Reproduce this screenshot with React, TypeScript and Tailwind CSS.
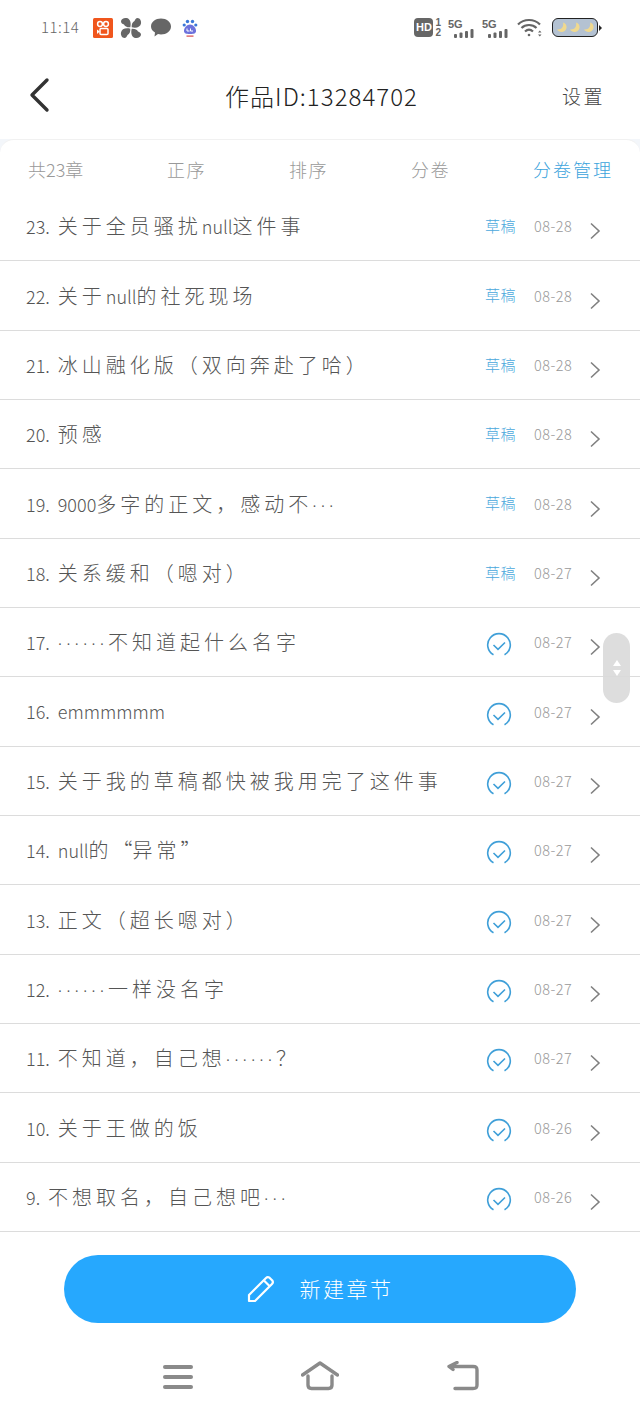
const drafts = [
  { title: "23. 关于全员骚扰null这件事", date: "08-28", draft: true },
  { title: "22. 关于null的社死现场", date: "08-28", draft: true },
  { title: "21. 冰山融化版（双向奔赴了哈）", date: "08-28", draft: true },
  { title: "20. 预感", date: "08-28", draft: true },
  { title: "19. 9000多字的正文，感动不···", date: "08-28", draft: true },
  { title: "18. 关系缓和（嗯对）", date: "08-27", draft: true },
  { title: "17. ······不知道起什么名字", date: "08-27", draft: false },
  { title: "16. emmmmmm", date: "08-27", draft: false },
  { title: "15. 关于我的草稿都快被我用完了这件事", date: "08-27", draft: false },
  { title: "14. null的“异常”", date: "08-27", draft: false },
  { title: "13. 正文（超长嗯对）", date: "08-27", draft: false },
  { title: "12. ······一样没名字", date: "08-27", draft: false },
  { title: "11. 不知道，自己想······？", date: "08-27", draft: false },
  { title: "10. 关于王做的饭", date: "08-26", draft: false },
  { title: "9. 不想取名，自己想吧···", date: "08-26", draft: false },
];

// latin runs sit tighter than the hanzi in the original handwriting font
const Title = ({ text }: { text: string }) => (
  <>
    {text
      .split(/(·+|“|emmmmmm|[0-9A-Za-z. ]+)/)
      .filter(Boolean)
      .map((part, i) => {
        if (part[0] === "·")
          return (
            <span key={i} className="text-[18px] tracking-[4px] [font-family:'Noto_Sans',sans-serif]">
              {part}
            </span>
          );
        if (part === "“")
          return (
            <span key={i} className="text-[20px]">
              {part}
            </span>
          );
        if (part === "emmmmmm")
          return (
            <span key={i} className="text-[18px] tracking-[-1.5px]">
              {part}
            </span>
          );
        if (/^[0-9A-Za-z. ]/.test(part))
          return (
            <span key={i} className="text-[18px] [word-spacing:4px]">
              {part}
            </span>
          );
        return (
          <span key={i} className="text-[20px] tracking-[4px]">
            {part}
          </span>
        );
      })}
  </>
);

const Chevron = () => (
  <svg width="12" height="18" viewBox="0 0 12 18" className="mt-[10px] shrink-0">
    <path d="M1 1.5 L9 9 L1 16.5" fill="none" stroke="#808080" strokeWidth="1.6" />
  </svg>
);

const CheckCircle = () => (
  <svg width="26" height="26" viewBox="0 0 26 26" className="mt-1.5">
    <path d="M7.5 22.8 A11.3 11.3 0 1 1 18.5 22.8" fill="none" stroke="#3f9fd8" strokeWidth="1.6" />
    <path d="M7.5 13 L12 17.3 L19 10.5" fill="none" stroke="#3f9fd8" strokeWidth="1.6" />
  </svg>
);

const StatusBar = () => (
  <div className="h-[54px] flex items-center justify-between pl-[41px] pr-[38px] pt-[1px]">
    <div className="flex items-center">
      <span className="text-[15px] tracking-[0.5px] text-[#666] w-[52px]">11:14</span>
      <svg width="20" height="20" viewBox="0 0 20 20">
        <rect width="20" height="20" rx="1.5" fill="#f0561d" />
        <circle cx="7" cy="6" r="2.4" fill="none" stroke="#fff" strokeWidth="1.5" />
        <circle cx="13" cy="6" r="2.4" fill="none" stroke="#fff" strokeWidth="1.5" />
        <rect x="7" y="10.5" width="8" height="6" rx="1" fill="none" stroke="#fff" strokeWidth="1.5" />
        <path d="M6.8 13.5 L4 11.5 V16 Z" fill="#fff" />
      </svg>
      <svg width="22" height="22" viewBox="0 0 22 22" className="ml-[7px]" fill="#666">
        <path d="M10.3 10.3 C7 10.5 5 9.5 4 7.5 C2.5 7 1 6 1 4.5 C1 2 4 0.5 6.5 1 C10 1.5 11.5 5.5 10.3 10.3 Z" />
        <path d="M11.7 10.3 C11.5 7 12.5 5 14.5 4 C15 2.5 16 1 17.5 1 C20 1 21.5 4 21 6.5 C20.5 10 16.5 11.5 11.7 10.3 Z" />
        <path d="M11.7 11.7 C15 11.5 17 12.5 18 14.5 C19.5 15 21 16 21 17.5 C21 20 18 21.5 15.5 21 C12 20.5 10.5 16.5 11.7 11.7 Z" />
        <path d="M10.3 11.7 C10.5 15 9.5 17 7.5 18 C7 19.5 6 21 4.5 21 C2 21 0.5 18 1 15.5 C1.5 12 5.5 10.5 10.3 11.7 Z" />
      </svg>
      <svg width="20" height="20" viewBox="0 0 20 20" className="ml-[9px]" fill="#666">
        <path d="M10 0.5 C15.5 0.5 20 3.8 20 8.5 C20 13.2 15.5 16.5 10 16.5 C9 16.5 8 16.4 7 16.1 L3.5 18.5 L4 14.5 C1.5 13 0 11 0 8.5 C0 3.8 4.5 0.5 10 0.5 Z" />
      </svg>
      <svg width="16" height="20" viewBox="0 0 16 20" className="ml-[11px]">
        <circle cx="5.5" cy="3.5" r="1.7" fill="#3a78d8" />
        <circle cx="10.5" cy="3.5" r="1.7" fill="#3a78d8" />
        <circle cx="2.2" cy="7" r="1.6" fill="#3a78d8" />
        <circle cx="13.8" cy="7" r="1.6" fill="#3a78d8" />
        <path d="M8 6.5 C11 6.5 14.5 10 14 13.5 C13.6 16 10 16 8 16 C6 16 2.4 16 2 13.5 C1.5 10 5 6.5 8 6.5 Z" fill="#6d72dc" />
        <path d="M5 10.5 V13 H7.5 M8.5 10.5 V13 H11" fill="none" stroke="#fff" strokeWidth="1" />
        <rect x="4.5" y="17.5" width="7" height="1.2" fill="#d84a4a" />
      </svg>
    </div>
    <div className="flex items-center">
      <div className="flex items-center">
        <span className="w-[19px] h-[19px] rounded-[4px] bg-[#666] text-white text-[11px] font-bold leading-[19px] text-center [font-family:'Liberation_Sans',sans-serif]">
          HD
        </span>
        <span className="ml-[2px] flex flex-col text-[10px] leading-[10px] font-bold text-[#666] [font-family:'Liberation_Sans',sans-serif]">
          <span>1</span>
          <span>2</span>
        </span>
      </div>
      {[0, 1].map((i) => (
        <div key={i} className="ml-[7px] relative w-[27px] h-[20px]">
          <span className="absolute left-0 top-[-2px] text-[11px] font-bold text-[#666] [font-family:'Liberation_Sans',sans-serif]">
            5G
          </span>
          <svg width="21" height="9" viewBox="0 0 21 9" className="absolute left-[6px] bottom-0" fill="#666">
            <rect x="0" y="5" width="3" height="4" rx="1" />
            <rect x="5.5" y="3.5" width="3" height="5.5" rx="1" />
            <rect x="11" y="2" width="3" height="7" rx="1" />
            <rect x="16.5" y="0" width="3" height="9" rx="1" />
          </svg>
        </div>
      ))}
      <svg width="25" height="20" viewBox="0 0 25 20" className="ml-[8px]" fill="none" stroke="#666" strokeWidth="2.2">
        <path d="M1 6.5 C7 0.5 17 0.5 23 6.5" />
        <path d="M4.5 10 C8.5 6 15.5 6 19.5 10" />
        <path d="M8 13.5 C10.5 11.2 13.5 11.2 16 13.5" />
        <circle cx="12" cy="17" r="1.3" fill="#666" stroke="none" />
        <path d="M21 14.5 L22.8 12.5 L24.5 14.5 Z M21 16.5 L22.8 18.5 L24.5 16.5 Z" fill="#666" stroke="none" />
      </svg>
      <div className="ml-[10px] w-[46px] h-[19px] rounded-[6px] border-[1.5px] border-[#222] bg-[#b4c2d2] flex items-center justify-around px-[2px]">
        {[0, 1, 2].map((i) => (
          <svg key={i} width="11" height="11" viewBox="0 0 11 11">
            <path d="M7 0.5 C8 4 6 8 1 7.5 C3 11 9.5 11 10.5 6 C11 3.5 9.5 1 7 0.5 Z" fill="#f0d98f" />
          </svg>
        ))}
      </div>
      <span className="w-0 h-0 ml-[1px] border-y-[3px] border-y-transparent border-l-[3px] border-l-[#222]" />
    </div>
  </div>
);

const App = () => {
  return (
    <div className="relative w-[640px] h-[1415px] overflow-hidden bg-white font-['Noto_Sans_CJK_SC','Noto_Sans',sans-serif] font-light">
      <StatusBar />

      <div className="h-[85px] flex items-center justify-between pl-[27px] pr-[37px] pb-[1px]">
        <svg width="24" height="36" viewBox="0 0 24 36" className="mb-[2px]">
          <path d="M20 3 L5 18 L20 33" fill="none" stroke="#333" strokeWidth="3.4" strokeLinecap="round" strokeLinejoin="round" />
        </svg>
        <div className="text-[24px] tracking-[1.05px] text-[#222] ml-[30px]">作品ID:13284702</div>
        <div className="text-[19px] tracking-[2.5px] text-[#444] -mr-[2px]">设置</div>
      </div>

      <div className="bg-[#f3f6fa]">
        <div className="rounded-t-[14px] bg-white h-[53px] flex items-center pl-[28px] pt-[7px] text-[18px] text-[#999] border-t border-[#f1f1f1]">
          <span className="w-[139px] whitespace-nowrap">共23章</span>
          <span className="w-[122px] tracking-[1.5px]">正序</span>
          <span className="w-[122px] tracking-[1.5px]">排序</span>
          <span className="w-[122px] tracking-[1.5px]">分卷</span>
          <span className="text-[#3ba3dc] tracking-[2px] whitespace-nowrap">分卷管理</span>
        </div>
      </div>

      <div>
        {drafts.map((c) => (
          <div key={c.title} className="h-[69.35px] flex items-center pl-[26px] pr-[38px] border-b border-[#dcdcdc] bg-white">
            <div className="flex-1 min-w-0 text-[#555] whitespace-nowrap">
              <Title text={c.title} />
            </div>
            {c.draft ? (
              <div className="w-[32px] mr-[17px] text-[15px] text-[#4aa8dc] whitespace-nowrap tracking-[0.5px]">草稿</div>
            ) : (
              <div className="w-[26px] mr-[22px] -ml-[1px]">
                <CheckCircle />
              </div>
            )}
            <div className="w-[40px] text-[14.5px] tracking-[0.5px] text-[#999] mr-[16px] whitespace-nowrap">{c.date}</div>
            <Chevron />
          </div>
        ))}
      </div>

      <div className="pt-[23px] px-[64px]">
        <button className="w-[512px] h-[68px] rounded-[34px] bg-[#26a8fe] flex items-center justify-center text-white">
          <svg width="28" height="28" viewBox="0 0 28 28" fill="none" stroke="#fff" strokeWidth="2.2" strokeLinejoin="round" className="mr-[25px] ml-[4px]">
            <path d="M2 26 V20 L19 3 C20 2 21.5 2 22.5 2.7 L25.3 5.5 C26 6.5 26 8 25 9 L8 26 Z" />
            <path d="M17 5.5 L22.5 11" />
          </svg>
          <span className="text-[21px] tracking-[2.5px] mr-[4px]">新建章节</span>
        </button>
      </div>

      <div className="pt-[38px] pl-[163px] pr-[161px] flex items-start justify-between">
        <div className="w-[30px] flex flex-col gap-[6.5px] mt-[4px]">
          <span className="h-[3.5px] rounded-full bg-[#8a8a8a]" />
          <span className="h-[3.5px] rounded-full bg-[#8a8a8a]" />
          <span className="h-[3.5px] rounded-full bg-[#8a8a8a]" />
        </div>
        <svg width="38" height="30" viewBox="0 0 38 30" fill="none" stroke="#8a8a8a" strokeWidth="3.4" strokeLinecap="round" strokeLinejoin="round">
          <path d="M1.5 14 L19 2 L36.5 14" />
          <path d="M7 15 V24 C7 26.5 8 27.5 10.5 27.5 H27.5 C30 27.5 31 26.5 31 24 V15" />
        </svg>
        <svg width="32" height="30" viewBox="0 0 32 30" fill="none" stroke="#8a8a8a" strokeWidth="3.4" strokeLinecap="round" strokeLinejoin="round">
          <path d="M3 5.5 H26 C29 5.5 30 6.5 30 9 V24 C30 26.5 29 27.5 26 27.5 H8" />
          <path d="M10 1.5 L2 5.5 L6 8.5" />
        </svg>
      </div>

      <div className="absolute left-[603px] top-[633px] w-[27px] h-[70px] rounded-full bg-[#d9d9d9]/90 flex flex-col items-center justify-center gap-[4px]">
        <span className="w-0 h-0 border-x-[4px] border-x-transparent border-b-[6px] border-b-white" />
        <span className="w-0 h-0 border-x-[4px] border-x-transparent border-t-[6px] border-t-white" />
      </div>
    </div>
  );
};

export default App;
